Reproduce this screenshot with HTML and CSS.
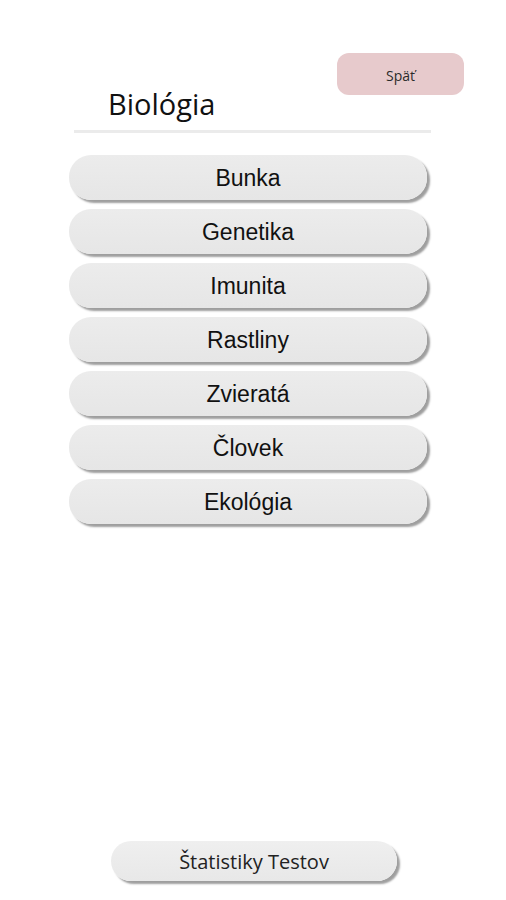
FILE: index.html
```html
<!DOCTYPE html>
<html lang="sk">
<head>
<meta charset="utf-8">
<title>Biológia</title>
<link rel="stylesheet" href="styles.css">
</head>
<body>
<div class="page">
  <header class="header">
    <h1 class="title">Biológia</h1>
    <button class="back">Späť</button>
  </header>
  <div class="divider"></div>
  <nav class="topics">
    <button class="topic">Bunka</button>
    <button class="topic">Genetika</button>
    <button class="topic">Imunita</button>
    <button class="topic">Rastliny</button>
    <button class="topic">Zvieratá</button>
    <button class="topic">Človek</button>
    <button class="topic">Ekológia</button>
  </nav>
  <footer class="footer">
    <button class="stats">Štatistiky Testov</button>
  </footer>
</div>
</body>
</html>
```

FILE: styles.css
```css
html, body {
  margin: 0;
  padding: 0;
  background: #ffffff;
}

.page {
  min-height: 900px;
  display: flex;
  flex-direction: column;
  box-sizing: border-box;
}

.header {
  display: flex;
  justify-content: space-between;
  align-items: flex-start;
  padding: 53px 42px 0 74px;
}

.title {
  margin: 31px 0 0 34px;
  font-family: "Open Sans", sans-serif;
  font-weight: 400;
  font-size: 29px;
  line-height: 40px;
  color: #111111;
}

.back {
  width: 127px;
  height: 42px;
  border: none;
  border-radius: 12px;
  background: #e7cacc;
  font-family: "Open Sans", sans-serif;
  font-size: 14px;
  color: #2a2a2a;
  padding: 2px 0 0 0;
}

.divider {
  margin: 6px 75px 0 74px;
  height: 3px;
  background: #ebebeb;
}

.topics {
  display: flex;
  flex-direction: column;
  gap: 9px;
  margin: 22px 0 0 69px;
  width: 358px;
}

.topic {
  height: 45px;
  border: none;
  border-radius: 22px;
  background: linear-gradient(#ececec, #e6e6e6);
  box-shadow: 3px 3px 2px rgba(0, 0, 0, 0.38);
  font-family: "Liberation Sans", Arial, sans-serif;
  font-size: 23px;
  color: #111111;
  padding: 2px 0 0 0;
}

.footer {
  margin-top: auto;
  padding: 0 0 19px 111px;
}

.stats {
  width: 286px;
  height: 40px;
  border: none;
  border-radius: 20px;
  background: linear-gradient(#efefef, #e8e8e8);
  box-shadow: 3px 3px 2px rgba(0, 0, 0, 0.38);
  font-family: "Open Sans", sans-serif;
  font-size: 20px;
  color: #222222;
  padding: 0;
}
```
